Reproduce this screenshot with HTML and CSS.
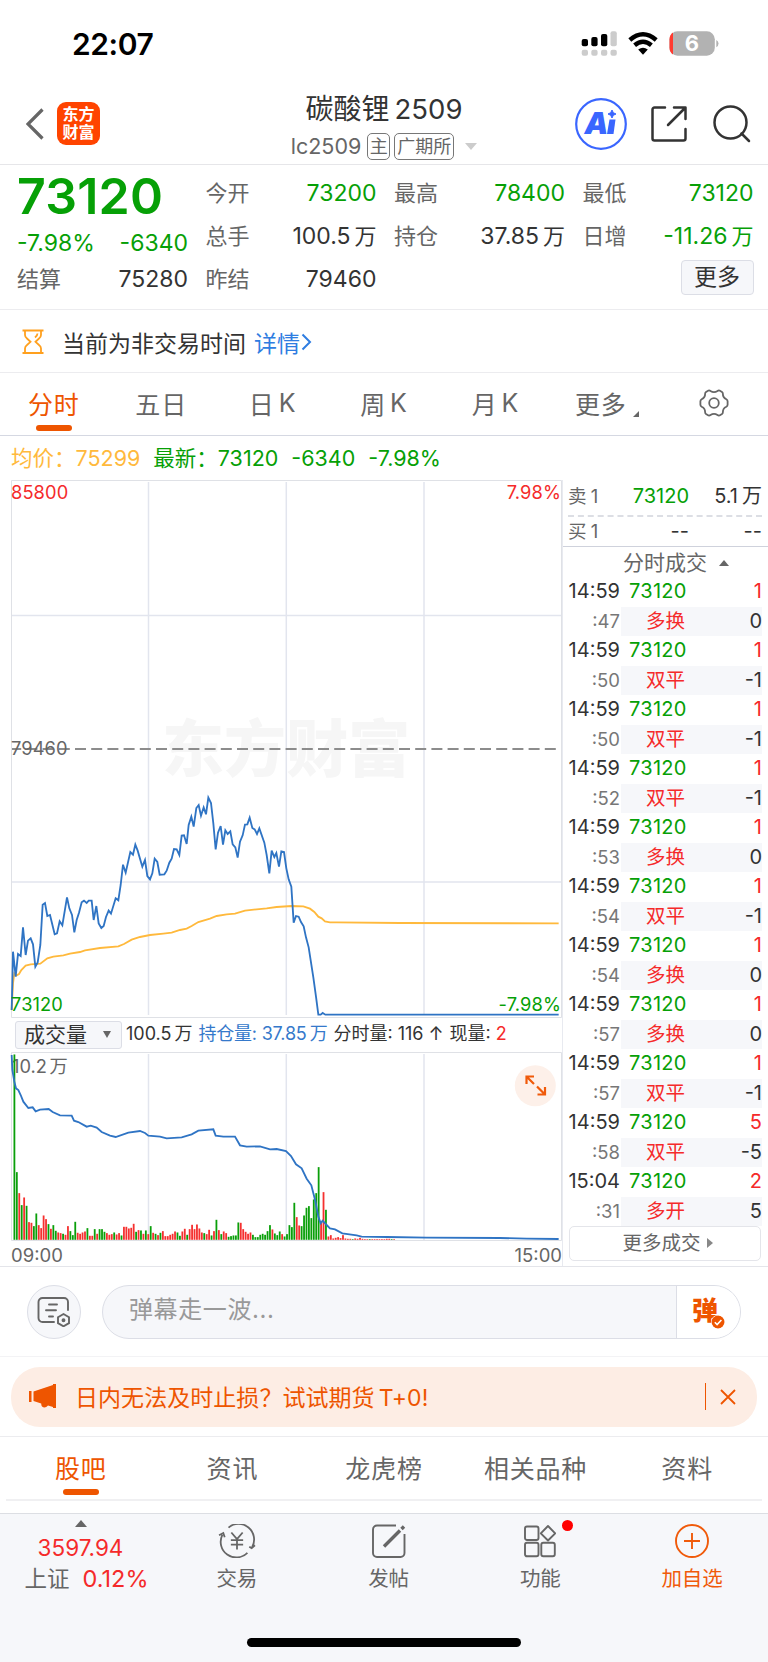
FILE: index.html
```
<!DOCTYPE html>
<html lang="zh-CN">
<head>
	<meta charset="UTF-8">
	<title>碳酸锂2509</title>
	<link rel="stylesheet" href="styles.css">
</head>
<body>
	<div id="status">
		<span class="clock">22:07</span>
		<svg class="signal" width="138" height="26" viewBox="0 0 138 26">
			<g fill="#000">
				<rect x=".7" y="8" width="6.3" height="7.2" rx="2"/>
				<rect x="10.3" y="6" width="6.3" height="9.2" rx="2"/>
				<rect x="20" y="3" width="6.3" height="12.2" rx="2"/>
			</g>
			<g fill="#ccc">
				<rect x="29.5" y=".3" width="6.3" height="15" rx="2"/>
				<rect x=".7" y="18.7" width="6.3" height="6" rx="2"/>
				<rect x="10.3" y="18.7" width="6.3" height="6" rx="2"/>
				<rect x="20" y="18.7" width="6.3" height="6" rx="2"/>
				<rect x="29.5" y="18.7" width="6.3" height="6" rx="2"/>
			</g>
			<path d="M48.8 9Q62 -2.5 75.2 9M53.6 14.2Q62 7.2 70.4 14.2" fill="none" stroke="#000" stroke-width="4.4"/>
			<path d="M57.2 18.6Q62 14.8 66.8 18.6L62 23.8Z"/>
			<rect x="88.5" y=".3" width="45.3" height="24.4" rx="8" fill="#b2b2b2"/>
			<path d="M92 1.6A8 8 0 0 0 88.5 8.3V16.7A8 8 0 0 0 92 23.4Z" fill="#ff3b30"/>
			<path d="M135.3 9q2.2 1 2.2 3.6t-2.2 3.6z" fill="#b2b2b2"/>
			<text x="111" y="20.4" font-size="22" font-weight="700" fill="#fff" text-anchor="middle">6</text>
		</svg>
	</div>

	<header id="header">
		<div class="left">
			<svg width="18" height="32" viewBox="0 0 18 32"><path d="M16.5 1.5L2 16l14.500 14.500" fill="none" stroke="#666" stroke-width="3.2"/></svg>
			<div class="logo">东方<br>财富</div>
		</div>
		<div class="title">
			<h1>碳酸锂<span>2509</span></h1>
			<p>lc2509<i>主</i><i class="wide">广期所</i><b></b></p>
		</div>
		<div class="right">
			<svg class="ai" width="52" height="52" viewBox="0 0 52 52">
				<circle cx="26" cy="26" r="24.800" fill="#fff" stroke="#3a66ff" stroke-width="2.200"/>
				<text x="9.500" y="35.500" font-size="30" font-weight="900" font-style="italic" fill="#3a66ff">A</text>
				<path d="M34.500 21.500h6l-2 14.500h-6.500z" fill="#3a66ff"/>
				<path d="M37 12l1.300 2.700 2.700 1.300-2.700 1.300L37 20l-1.300-2.700L33 16l2.700-1.300z" fill="#3a66ff" stroke="#3a66ff"/>
			</svg>
			<svg class="share" width="38" height="38" viewBox="0 0 38 38" fill="none" stroke="#333" stroke-width="2.500" stroke-linecap="round" stroke-linejoin="round">
				<path d="M15 2.500H4.500a2 2 0 0 0-2 2v29a2 2 0 0 0 2 2h29a2 2 0 0 0 2-2V24M24 2.500h11.500V14M35 3L18 20"/>
			</svg>
			<svg class="search" width="38" height="38" viewBox="0 0 38 38" fill="none" stroke="#333" stroke-width="2.500" stroke-linecap="round">
				<circle cx="17.500" cy="17.500" r="16"/><path d="M28.500 28.500l7.500 7.500"/>
			</svg>
		</div>
	</header>

	<section id="quote">
		<div class="col">
			<strong>73120</strong>
			<p class="green change"><span>-7.98%</span><span>-6340</span></p>
			<p><label>结算</label><span>75280</span></p>
		</div>
		<div class="col">
			<p><label>今开</label><span class="green">73200</span></p>
			<p><label>总手</label><span>100.5<em>万</em></span></p>
			<p><label>昨结</label><span>79460</span></p>
		</div>
		<div class="col">
			<p><label>最高</label><span class="green">78400</span></p>
			<p><label>持仓</label><span>37.85<em>万</em></span></p>
		</div>
		<div class="col">
			<p><label>最低</label><span class="green">73120</span></p>
			<p><label>日增</label><span class="green">-11.26<em>万</em></span></p>
			<a class="more" href="javascript:;">更多</a>
		</div>
	</section>

	<div id="notice">
		<svg width="22" height="26" viewBox="0 0 22 26" fill="none" stroke="#ffa01e" stroke-width="1.800">
			<path d="M.5 1.500h21M.5 24h21M3 2v4q0 2 2 3.500l3.500 3.300L5 16q-2 1.500-2 3.500V24M19 2v4q0 2-2 3.500l-3.500 3.300L17 16q2 1.500 2 3.500V24M15.500 4.500q0 2-2.500 4"/>
		</svg>
		<span>当前为非交易时间</span>
		<a href="javascript:;">详情</a>
		<svg width="11" height="18" viewBox="0 0 11 18"><path d="M1.500 1.500L9 9l-7.500 7.500" fill="none" stroke="#2f7de1" stroke-width="2"/></svg>
	</div>

	<nav id="period">
		<a class="on" href="javascript:;">分时</a>
		<a href="javascript:;">五日</a>
		<a class="k" href="javascript:;">日<em>K</em></a>
		<a class="k" href="javascript:;">周<em>K</em></a>
		<a class="k" href="javascript:;">月<em>K</em></a>
		<a class="k" href="javascript:;">更多<b></b></a>
		<a href="javascript:;">
			<svg width="30" height="28" viewBox="0 0 30 28" fill="none" stroke="#666" stroke-width="1.800" stroke-linejoin="round">
				<path d="M9.500 1.500Q10.500 1.200 11.500 2Q15 4.300 18.500 2Q19.500 1.200 20.500 1.500L23 3Q24 3.700 23.900 5Q23.800 8.500 27.300 10.200Q28.600 11 28.600 12.200V15.800Q28.600 17 27.300 17.800Q23.800 19.500 23.900 23Q24 24.300 23 25L20.500 26.500Q19.500 26.800 18.500 26Q15 23.700 11.500 26Q10.500 26.800 9.500 26.500L7 25Q6 24.300 6.100 23Q6.200 19.500 2.700 17.800Q1.400 17 1.400 15.800V12.200Q1.400 11 2.700 10.200Q6.200 8.500 6.100 5Q6 3.700 7 3Z"/>
				<circle cx="15" cy="14" r="4.800"/>
			</svg>
		</a>
	</nav>

	<p id="latest">
		<span class="avg">均价：75299</span>
		<span>最新：73120</span>
		<span>-6340</span>
		<span>-7.98%</span>
	</p>

	<main id="main">
		<div id="chart">
			<svg class="price" width="562" height="538" viewBox="0 0 562 538">
				<text class="mark" x="162" y="292">东方财富</text>
				<path class="grid" d="M148.500 2V535M286.300 2V535M424 2V535M11 135.500H561M11 402H561"/>
				<path class="box" d="M11.500 537.500V.5H561.500V537.500Z"/>
				<path d="M12 269H561" stroke="#8c8c8c" stroke-width="2" stroke-dasharray="11 5.200" stroke-dashoffset="1.800"/>
				<g transform="translate(0 220) scale(.33333)">
					<polyline class="avg-line" points="35,930 39,850 43,820 50,826 57,822 64,810 77,797 92,793 121,791 142,775 160,770 190,766 210,761 240,756 255,751 300,744 355,739 372,732 395,719 420,711 450,705 490,701 515,698 540,690 560,686 575,678 595,666 630,656 650,648 680,643 705,641 735,632 770,628 800,625 830,621 875,618 910,619 930,626 943,636 955,650 965,655 975,664 990,667 1010,667 1200,669 1676,670"/>
					<polyline class="line" points="35,930 37,850 39,755 47,830 54,762 62,768 69,682 77,765 84,722 92,715 99,733 106,800 113,787 121,735 128,614 135,609 142,648 150,645 164,703 171,700 179,664 187,676 201,592 208,625 216,645 223,697 230,660 237,638 245,607 252,602 260,609 266,602 275,602 281,660 289,618 296,670 304,684 311,678 318,651 326,632 333,641 347,595 355,601 362,555 369,494 377,518 391,456 399,464 406,434 413,452 427,500 435,480 442,528 450,538 457,520 464,476 472,486 479,524 493,523 500,512 508,488 515,476 522,447 530,448 538,465 545,407 552,406 560,432 566,375 574,350 581,380 589,324 596,315 603,347 611,322 618,343 625,293 633,309 640,370 647,448 654,398 662,378 669,434 676,391 683,402 691,394 698,433 706,442 713,473 720,425 728,406 735,374 742,373 749,353 757,384 764,388 771,402 778,385 793,428 800,465 808,520 815,452 823,471 829,459 837,500 844,454 852,456 859,505 866,538 874,560 881,668 888,648 896,650 903,666 911,679 918,712 926,742 940,832 948,890 955,944 962,944 968,939 976,944 1676,944"/>
				</g>
				<text class="red" x="11" y="19">85800</text>
				<text class="red" x="561" y="19" text-anchor="end">7.98%</text>
				<text class="gray" x="11" y="275">79460</text>
				<text class="green" x="11" y="531">73120</text>
				<text class="green" x="561" y="531" text-anchor="end">-7.98%</text>
			</svg>
			<div class="legend">
				<a class="select" href="javascript:;">成交量<b></b></a>
				<span>100.5<em>万</em></span>
				<span class="blue">持仓量: 37.85<em>万</em></span>
				<span>分时量: 116 ↑</span>
				<span>现量: <i class="red">2</i></span>
			</div>
			<svg class="volume" width="562" height="190" viewBox="0 0 562 190">
				<path class="grid" d="M148.500 2V188M286.300 2V188M424 2V188"/>
				<path class="box" d="M11.500 188.500V.5H561.500V188.500Z"/>
				<text class="gray unit" x="12" y="20.500">10.2 万</text>
				<g id="bars"></g>
				<polyline class="line" transform="translate(0 -42) scale(.33333)" points="35,135 37,180 43,215 48,235 55,240 62,255 70,275 85,294 98,292 107,304 120,299 146,297 158,306 180,316 215,317 222,332 235,336 260,350 272,347 290,353 305,366 330,377 347,381 385,368 420,363 435,369 445,377 480,380 500,385 545,382 575,373 595,362 640,358 647,377 670,380 705,380 720,406 740,410 780,409 810,418 830,417 858,423 873,438 888,463 905,475 920,506 934,526 946,573 955,620 962,640 968,632 980,645 990,655 1005,658 1027,670 1070,676 1085,680 1160,681 1280,683 1500,684 1580,686 1676,687"/>
				<circle cx="535.300" cy="33.700" r="20.500" fill="#fdf0e9"/>
				<path d="M526.500 32V24.500H534M527 25l7 7M545 35v7.500h-7.500M544.500 42l-7.500-7.500" fill="none" stroke="#f05a0a" stroke-width="2.200"/>
			</svg>
			<p class="time"><span>09:00</span><span>15:00</span></p>
		</div>

		<aside id="deal">
			<p class="order sell"><label>卖 1</label><span class="green">73120</span><span>5.1<em>万</em></span></p>
			<p class="order"><label>买 1</label><span>--</span><span>--</span></p>
			<h2>分时成交<b></b></h2>
			<ul id="ticks"></ul>
			<a class="all" href="javascript:;">更多成交<b></b></a>
		</aside>
	</main>

	<div id="danmu">
		<a class="setting" href="javascript:;">
			<svg width="34" height="30" viewBox="0 0 34 30" fill="none" stroke="#666" stroke-width="1.900" stroke-linecap="round">
				<path d="M17 25H5.500a4 4 0 0 1-4-4V5a4 4 0 0 1 4-4H27a4 4 0 0 1 4 4V13M12 7.500h8M9 13.300h10M12 19.500h4"/>
				<path d="M26.500 17l5.500 3.200v6L26.500 29.300 21 26.200v-6z"/>
				<circle cx="26.500" cy="23.200" r="1" fill="#666"/>
			</svg>
		</a>
		<div class="input">
			<span>弹幕走一波...</span>
			<a href="javascript:;">弹<svg width="14" height="14" viewBox="0 0 14 14"><circle cx="7" cy="7" r="6.500" fill="#ee5500"/><path d="M3.800 7.200l2.300 2.300 4.300-4.500" fill="none" stroke="#fff" stroke-width="1.600"/></svg></a>
		</div>
	</div>

	<div id="banner">
		<svg width="28" height="25" viewBox="0 0 28 25" fill="#ee5500"><path d="M1 7h2.500v11H1zM5.500 7.500L25 1V0h3v24h-3v-1l-5-1.500q-3 3.500-6 1-.8-1-.8-3L5.500 17z"/></svg>
		<span>日内无法及时止损？试试期货<em>T+0!</em></span>
		<i></i>
		<svg width="16" height="16" viewBox="0 0 16 16"><path d="M1 1l14 14M15 1L1 15" stroke="#ee5500" stroke-width="1.800"/></svg>
	</div>

	<nav id="tabs">
		<a class="on" href="javascript:;">股吧</a>
		<a href="javascript:;">资讯</a>
		<a href="javascript:;">龙虎榜</a>
		<a href="javascript:;">相关品种</a>
		<a href="javascript:;">资料</a>
	</nav>

	<footer id="footer">
		<div class="bar">
			<a class="index" href="javascript:;">
				<b></b>
				<span class="red">3597.94</span>
				<span class="rate">上证<i class="red">0.12%</i></span>
			</a>
			<a href="javascript:;">
				<svg width="40" height="36" viewBox="0 0 40 36" fill="none" stroke="#666" stroke-width="1.900">
					<path d="M11 3.800A16.500 16.500 0 0 1 36 24.500M31 30.500A16.500 16.500 0 0 1 4.500 11.500M1 12l4.500-2.500L7 14M33 24l2.500 1.500 3.500-3M14 9l6 7 6-7M20 16v11M13.500 17h13M13.500 21.800h13"/>
				</svg>
				<span>交易</span>
			</a>
			<a href="javascript:;">
				<svg width="34" height="34" viewBox="0 0 34 34" fill="none" stroke="#666" stroke-width="1.900">
					<path d="M24 1.500H5a4 4 0 0 0-4 4V29a4 4 0 0 0 4 4H28.500a4 4 0 0 0 4-4V10"/>
					<path d="M12 22.500L28 6.500M29.500 5l2.500-2.500" stroke-width="3.400"/>
				</svg>
				<span>发帖</span>
			</a>
			<a href="javascript:;">
				<svg width="32" height="34" viewBox="0 0 32 34" fill="none" stroke="#666" stroke-width="1.900" stroke-linejoin="round">
					<rect x="1" y="2.500" width="13.500" height="13.500" rx="2"/>
					<rect x="1" y="18.800" width="13.500" height="13.500" rx="2"/>
					<rect x="17.300" y="18.800" width="13.500" height="13.500" rx="2"/>
					<path d="M24 2l7.200 7.300L24 16.500l-7.200-7.200z"/>
				</svg>
				<span>功能</span>
				<i class="dot"></i>
			</a>
			<a class="add" href="javascript:;">
				<svg width="34" height="34" viewBox="0 0 34 34" fill="none" stroke="#f05a0a" stroke-width="1.900"><circle cx="17" cy="17" r="16"/><path d="M17 9v16M9 17h16"/></svg>
				<span>加自选</span>
			</a>
		</div>
		<div class="home"></div>
	</footer>

	<script>
	// 逐笔成交: 时间, 秒, 手数, 类型, 增仓
	var ticks = [
		['14:59',':47',1,'多换',0],
		['14:59',':50',1,'双平',-1],
		['14:59',':50',1,'双平',-1],
		['14:59',':52',1,'双平',-1],
		['14:59',':53',1,'多换',0],
		['14:59',':54',1,'双平',-1],
		['14:59',':54',1,'多换',0],
		['14:59',':57',1,'多换',0],
		['14:59',':57',1,'双平',-1],
		['14:59',':58',5,'双平',-5],
		['15:04',':31',2,'多开',5]
	];
	document.getElementById('ticks').innerHTML = ticks.map(function(t){
		return '<li><time>' + t[0] + '</time><p><span class="green">73120</span><span class="red">' + t[2] + '</span></p></li>' +
			'<li class="sub"><time>' + t[1] + '</time><p><span class="red">' + t[3] + '</span><span>' + t[4] + '</span></p></li>';
	}).join('');

	// 每分钟成交量, 正数为红柱, 负数为绿柱
	var vol = [-556,-203,140,-104,127,-102,53,51,-41,-79,44,35,73,62,-47,33,-44,-27,22,20,-18,15,41,-26,-14,-54,21,18,22,25,-35,12,12,-32,18,-32,-32,-24,20,15,17,-22,16,20,-13,39,39,34,36,48,-24,29,-28,18,-28,17,-41,21,-18,14,-21,26,11,11,15,18,25,-22,-12,25,33,-15,32,45,32,46,34,22,-20,17,30,-13,26,-60,29,-17,25,20,-9,-11,-13,-13,-52,51,32,24,18,22,-15,-8,-8,-15,-18,-15,-26,-44,31,-19,-14,-25,17,-10,-17,-44,-38,-111,68,43,-41,-73,-96,-101,-65,-121,-140,-218,53,143,-90,10,14,4,6,8,5,14,4,3,3,-2,4,3,6,3,2,2,-2,2,2,2,2,2,2,3,3,-2,2];
	document.getElementById('bars').innerHTML = vol.map(function(v,i){
		var h = Math.abs(v) / 3;
		return '<rect x="' + (13.5 + i * 2.434).toFixed(2) + '" y="' + (187.8 - h).toFixed(2) + '" width="1.8" height="' + h.toFixed(2) + '" fill="' + (v > 0 ? '#f5302f' : '#0a9f0a') + '"/>';
	}).join('');
	</script>
</body>
</html>
```
FILE: styles.css
```
* {
	box-sizing: border-box;
}
body {
	width: 768px;
	height: 1662px;
	margin: 0;
	overflow: hidden;
	background: #fff;
	color: #333;
	font: 23px Inter,"Noto Sans CJK SC",sans-serif;
}
p, h1, h2, ul {
	margin: 0;
	padding: 0;
	font-weight: normal;
	list-style: none;
}
a {
	color: inherit;
	text-decoration: none;
}
i, em {
	font-style: normal;
}
svg {
	display: block;
	flex: none;
}
.green {
	color: #06a006;
	fill: #06a006;
}
.red {
	color: #f52a2a;
	fill: #f52a2a;
}
.blue {
	color: #3579cb;
	letter-spacing: -.2px;
}
.gray {
	fill: #666;
}
#status {
	display: flex;
	justify-content: space-between;
	height: 80px;
	padding: 31px 49px 0 72px;
}
.clock {
	color: #000;
	font-size: 30px;
	font-weight: 600;
	line-height: 26px;
	letter-spacing: -.4px;
}
#header {
	display: grid;
	grid-template-columns: 1fr auto 1fr;
	height: 85px;
	border-bottom: 1px solid #e6e6e9;
}
#header .left {
	display: flex;
	align-items: center;
	padding: 3px 0 0 26px;
}
.logo {
	width: 43px;
	height: 43px;
	margin-left: 13px;
	padding-top: 3px;
	border-radius: 9px;
	background: #ff4400;
	color: #fff;
	font-size: 16px;
	font-weight: 700;
	line-height: 18px;
	text-align: center;
}
.title h1 {
	padding-top: 9px;
	font-size: 28px;
	line-height: 40px;
	text-align: center;
	white-space: nowrap;
}
.title h1 span {
	margin-left: 5px;
	font-size: 27.500px;
}
.title p {
	display: flex;
	align-items: center;
	justify-content: center;
	padding-top: 4px;
	color: #666;
	font-size: 21.500px;
	line-height: 27px;
}
.title i {
	width: 23px;
	height: 27px;
	margin-left: 6px;
	border: 1px solid #777;
	border-radius: 5px;
	font-size: 18px;
	line-height: 25px;
	text-align: center;
}
.title i.wide {
	width: 60px;
	margin-left: 4px;
}
.title b {
	margin-left: 11px;
	border: 6px solid transparent;
	border-top: 7px solid #ccc;
	border-bottom: 0;
}
#header .right {
	display: flex;
	align-items: center;
	justify-content: flex-end;
	padding: 4px 17px 0 0;
}
.share {
	margin: 0 25px 0 23px;
}
#quote {
	display: grid;
	grid-template-columns: repeat(4, 171px);
	column-gap: 17.500px;
	height: 145px;
	padding: 7px 15px 0 17px;
	border-bottom: 1px solid #ececef;
}
#quote p {
	display: flex;
	justify-content: space-between;
	line-height: 43px;
}
#quote label {
	color: #666;
	font-size: 22px;
}
#quote strong {
	display: block;
	height: 50px;
	color: #06a006;
	font-size: 50px;
	font-weight: 600;
	line-height: 49px;
	letter-spacing: .2px;
}
#quote .change {
	line-height: 42px;
	height: 36px;
}
em {
	margin-left: 4px;
}
#quote em {
	font-size: 22px;
}
#quote .more {
	display: block;
	width: 73px;
	height: 35px;
	margin: 2px 0 0 auto;
	border: 1px solid #dcdee6;
	border-radius: 4px;
	background: #f6f7fa;
	line-height: 33px;
	text-align: center;
}
#notice {
	display: flex;
	align-items: center;
	height: 63px;
	padding: 2px 0 0 22px;
	border-bottom: 1px solid #ececef;
	font-size: 23px;
}
#notice span {
	margin: 0 8px 0 18px;
}
#notice a {
	margin-right: 1px;
	color: #2f7de1;
}
#period, #tabs {
	display: flex;
	color: #666;
	font-size: 25px;
	letter-spacing: .8px;
}
#period {
	height: 63px;
	border-bottom: 1px solid #d5d8e2;
}
#period a, #tabs a {
	display: flex;
	position: relative;
	flex: 1;
	justify-content: center;
	align-items: center;
	padding-bottom: 2px;
}
#period .k {
	padding-left: 4px;
}
.on {
	color: #ee5500;
}
.on::after {
	position: absolute;
	bottom: 4px;
	width: 36px;
	height: 6px;
	border-radius: 3px;
	background: #ee5500;
	content: "";
}
#period b {
	margin: 22px 0 0 6px;
	border: 3.500px solid #666;
	border-top-color: transparent;
	border-left-color: transparent;
}
#latest {
	display: flex;
	gap: 13px;
	height: 44px;
	padding: 0 11px;
	color: #06a006;
	font-size: 21.500px;
	line-height: 45px;
}
#latest .avg {
	color: #ffb93c;
}
#main {
	display: flex;
	height: 787px;
	border-bottom: 1px solid #e4e5ea;
}
#chart {
	width: 562px;
}
#chart svg {
	font-size: 18.300px;
	letter-spacing: .1px;
}
#chart .mark {
	fill: #f6f6f6;
	font-size: 62px;
	font-weight: 900;
}
#chart .unit {
	word-spacing: -2.500px;
	letter-spacing: 0;
}
.grid, .box {
	fill: none;
	stroke: #e2e5ee;
	stroke-width: 1.500px;
}
.box {
	stroke: #dfe1e6;
	stroke-width: 1px;
}
.line, .avg-line {
	fill: none;
	stroke: #2f74c4;
	stroke-width: 5.500px;
}
.avg-line {
	stroke: #ffb93c;
}
.legend {
	display: flex;
	gap: 6px;
	align-items: center;
	height: 34px;
	padding-left: 15px;
	font-size: 18px;
	line-height: 26px;
	white-space: nowrap;
}
.legend span {
	height: 28px;
}
.legend em {
	margin-left: 3px;
}
.select {
	display: flex;
	justify-content: space-between;
	align-items: center;
	width: 107px;
	height: 28px;
	margin-right: -2px;
	padding: 0 10px 1px 8px;
	border: 1px solid #dcdee6;
	border-radius: 3px;
	background: #f6f7fa;
	font-size: 21px;
}
.select b {
	border: 4px solid transparent;
	border-top: 7px solid #666;
	border-bottom: 0;
}
.time {
	display: flex;
	justify-content: space-between;
	padding-left: 11px;
	color: #666;
	font-size: 18.500px;
	line-height: 26px;
}
#deal {
	flex: 1;
	border-left: 1px solid #e8eaf0;
	font-size: 20px;
}
.order {
	display: grid;
	grid-template-columns: 45px 76px 1fr;
	margin: 0 6px 0 5px;
	line-height: 28px;
	text-align: right;
}
.order label {
	color: #666;
	font-size: 18.500px;
	text-align: left;
	word-spacing: -1px;
}
.order.sell {
	height: 37px;
	border-bottom: 2px dashed #dcdee4;
	line-height: 32px;
}
#deal h2 {
	height: 31px;
	margin-top: 1px;
	padding-left: 21px;
	border-top: 1px solid #cfd2dc;
	color: #666;
	font-size: 21px;
	line-height: 31px;
	text-align: center;
}
#deal b {
	display: inline-block;
	margin-left: 12px;
	border: 5px solid transparent;
	border-top: 0;
	border-bottom: 6px solid #666;
	vertical-align: 4px;
}
#ticks li {
	display: flex;
	height: 29.500px;
	line-height: 28px;
}
#ticks time {
	width: 58px;
	padding-right: 1px;
	text-align: right;
}
#ticks p {
	display: flex;
	justify-content: space-between;
	width: 141px;
	padding: 0 0 0 8px;
}
#ticks .green {
	letter-spacing: .3px;
}
#ticks .sub time {
	color: #777;
	font-size: 18.500px;
}
#ticks .sub p {
	padding-left: 25px;
	background: #f6f7fa;
}
#ticks .sub .red {
	font-size: 19.500px;
}
#deal .all {
	display: block;
	width: 192px;
	height: 35px;
	margin-left: 6px;
	padding-left: 5px;
	border: 1px solid #e4e5ea;
	border-radius: 5px;
	color: #666;
	font-size: 19.500px;
	line-height: 32px;
	text-align: center;
}
#deal .all b {
	margin-left: 6px;
	border: 5px solid transparent;
	border-left: 6px solid #888;
	border-right: 0;
	vertical-align: 2px;
}
#danmu {
	display: flex;
	height: 90px;
	padding: 18px 27px 0;
	border-bottom: 1px solid #f3f3f5;
}
.setting {
	display: flex;
	justify-content: center;
	align-items: center;
	width: 54px;
	height: 54px;
	margin-right: 21px;
	border: 1px solid #dcdee6;
	border-radius: 50%;
	background: #f6f7fa;
}
.input {
	display: flex;
	flex: 1;
	height: 54px;
	overflow: hidden;
	border: 1px solid #dcdee6;
	border-radius: 27px;
	background: #f6f7fa;
	line-height: 48px;
}
.input span {
	flex: 1;
	padding-left: 26px;
	color: #999;
	font-size: 24px;
	letter-spacing: .6px;
}
.input a {
	position: relative;
	width: 64px;
	padding-left: 15px;
	border-left: 1px solid #dcdee6;
	background: #fff;
	color: #ee5500;
	font-size: 26px;
	font-weight: 900;
	line-height: 50px;
}
.input svg {
	position: absolute;
	left: 34px;
	top: 29px;
	border-radius: 50%;
	background: #fff;
}
#banner {
	display: flex;
	align-items: center;
	height: 60px;
	margin: 10px 11px;
	padding: 0 21px 1px 17px;
	border-radius: 29px;
	background: #fdede4;
	color: #ee5500;
	font-size: 23px;
	letter-spacing: .05px;
}
#banner span {
	flex: 1;
	padding: 0 0 2px 19px;
}
#banner i {
	width: 1px;
	height: 27px;
	margin-right: 14px;
	background: #ee5500;
}
#tabs {
	position: relative;
	height: 65px;
	margin-top: -1px;
	padding: 0 5px 2px;
	border-top: 1px solid #ececef;
}
#tabs::after {
	position: absolute;
	right: 6px;
	bottom: 0;
	left: 6px;
	height: 2px;
	background: #f0f0f2;
	content: "";
}
#footer {
	height: 162px;
	margin-top: 12px;
	border-top: 1px solid #dcdee3;
	background: #f6f7fa;
	color: #666;
	font-size: 20.500px;
}
.bar {
	display: flex;
	height: 124px;
}
.bar a {
	display: flex;
	position: relative;
	flex: 1;
	flex-direction: column;
	align-items: center;
	height: 90px;
}
.bar svg {
	height: 34px;
	margin: 10px 0 4px;
}
.bar a.index {
	flex: none;
	width: 161px;
	font-size: 22.500px;
	line-height: 31px;
}
.index b {
	margin: 6px 0 5px;
	border: 6px solid transparent;
	border-top: 0;
	border-bottom: 7px solid #666;
}
.rate {
	padding-left: 12px;
}
.index i {
	margin-left: 13px;
	font-size: 23.500px;
}
.bar .add {
	color: #f05a0a;
}
.dot {
	position: absolute;
	left: 97px;
	top: 6px;
	width: 11px;
	height: 11px;
	border-radius: 50%;
	background: #f00;
}
.home {
	width: 274px;
	height: 9px;
	margin: 0 auto;
	border-radius: 5px;
	background: #000;
}
```
